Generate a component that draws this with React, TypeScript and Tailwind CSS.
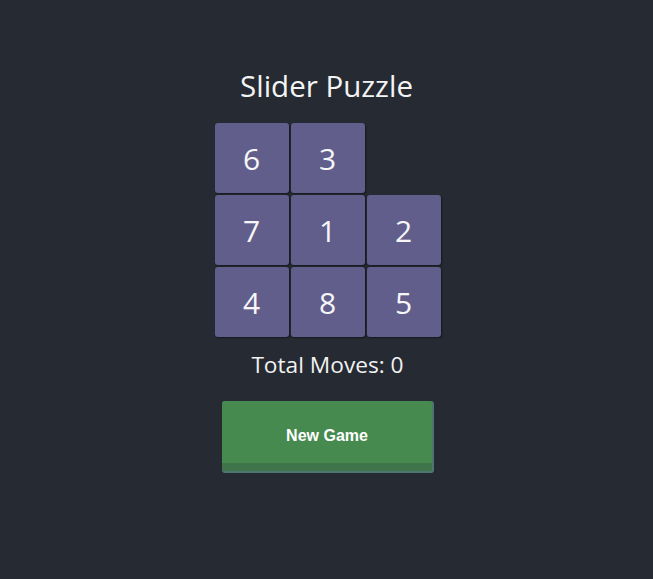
const tiles: (number | null)[] = [6, 3, null, 7, 1, 2, 4, 8, 5];

export default function App() {
  return (
    <div
      className="flex min-h-[579px] w-full flex-col items-center bg-[#262a33] text-white"
      style={{ fontFamily: '"Open Sans", "Noto Sans", sans-serif' }}
    >
      {/* Title */}
      <h1 className="mt-[64px] text-[29.5px] leading-[44px] text-[#f4f4f4]">
        Slider Puzzle
      </h1>

      {/* Board */}
      <div className="mt-[15px] ml-[2px] grid grid-cols-[74px_74px_74px] gap-[2px]">
        {tiles.map((n, i) =>
          n === null ? (
            <div key={i} className="h-[70px] w-[74px]" />
          ) : (
            <div
              key={i}
              className="flex h-[70px] w-[74px] items-center justify-center rounded-[3px] bg-[#625e8b] text-[30px] text-[#f6f6f8] shadow-[1px_1px_2px_rgba(0,0,0,0.45)]"
            >
              {n}
            </div>
          )
        )}
      </div>

      {/* Moves */}
      <p className="mt-[12px] ml-[2px] text-[22.7px] leading-[32px] text-[#f2f2f2]">
        Total Moves: 0
      </p>

      {/* Button */}
      <button
        className="mt-[20px] ml-[3px] flex h-[72px] w-[212px] flex-col overflow-hidden rounded-[3px] bg-[#4e7670] pr-[2px] pb-[2px]"
        style={{ fontFamily: '"Liberation Sans", Arial, sans-serif' }}
      >
        <span className="flex w-full flex-1 items-center justify-center rounded-[2px] border-b-[8px] border-[#3f734a] bg-[#468a4f] pt-[8px] text-[16px] font-bold text-white">
          New Game
        </span>
      </button>
    </div>
  );
}
